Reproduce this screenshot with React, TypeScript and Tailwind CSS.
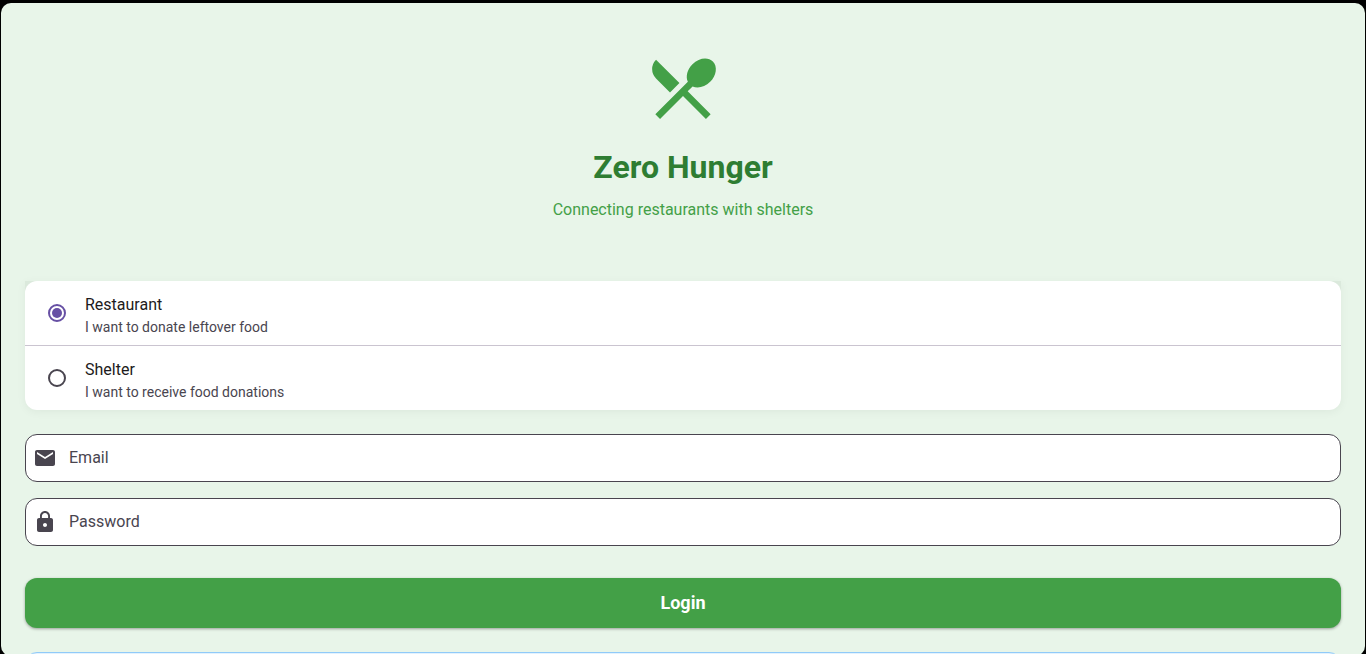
import { useState } from "react";
import { MdEmail, MdLock, MdRestaurantMenu } from "react-icons/md";

type Role = "restaurant" | "shelter";

const roles: { value: Role; title: string; detail: string }[] = [
  { value: "restaurant", title: "Restaurant", detail: "I want to donate leftover food" },
  { value: "shelter", title: "Shelter", detail: "I want to receive food donations" },
];

const fields = [
  { id: "email", label: "Email", type: "email", Icon: MdEmail },
  { id: "password", label: "Password", type: "password", Icon: MdLock },
];

function RolePicker() {
  const [role, setRole] = useState<Role>("restaurant");
  return (
    <div className="rounded-b-xl bg-[#dbe9dc] shadow-[0_2px_10px_rgba(0,0,0,0.05)]">
      <div className="divide-y divide-[#cac4d0] rounded-xl bg-white">
        {roles.map(({ value, title, detail }) => (
          <label key={value} className="box-content flex h-16 cursor-pointer items-center gap-[19px] px-[23px]">
            <input
              type="radio"
              name="role"
              value={value}
              checked={role === value}
              onChange={() => setRole(value)}
              className="grid size-[18px] shrink-0 appearance-none place-items-center rounded-full border-2 border-[#49454f] before:size-[10px] before:rounded-full checked:border-[#6750a4] checked:before:bg-[#6750a4]"
            />
            <span className="flex flex-col pt-1">
              <span className="text-base leading-6 text-[#1d1b20]">{title}</span>
              <span className="text-sm leading-5 text-[#49454f]">{detail}</span>
            </span>
          </label>
        ))}
      </div>
    </div>
  );
}

export default function App() {
  return (
    <div className="h-screen overflow-hidden bg-black px-px pt-[3px] font-['Roboto',sans-serif]">
      <main className="flex h-[calc(100%+2px)] flex-col rounded-[10px] bg-[#e8f5e9] px-6 pt-[45px]">
        <header className="flex shrink-0 flex-col items-center text-center">
          <MdRestaurantMenu className="size-20 text-[#43a047]" />
          <h1 className="mt-4 text-[32px] leading-[46px] font-bold text-[#2e7d32]">Zero Hunger</h1>
          <p className="mt-2 text-base leading-6 text-[#43a047]">Connecting restaurants with shelters</p>
        </header>

        <form className="mt-[59px] flex shrink-0 flex-col" onSubmit={(e) => e.preventDefault()}>
          <RolePicker />
          <div className="mt-6 flex flex-col gap-4">
            {fields.map(({ id, label, type, Icon }) => (
              <label
                key={id}
                htmlFor={id}
                className="flex h-12 items-center gap-3 rounded-xl border border-[#49454f] bg-white px-[7px] text-[#49454f]"
              >
                <Icon className="size-6 shrink-0" />
                <input
                  id={id}
                  type={type}
                  aria-label={label}
                  placeholder={label}
                  className="min-w-0 flex-1 bg-transparent text-base leading-6 outline-none placeholder:text-[#49454f]"
                />
              </label>
            ))}
          </div>
          <button
            type="submit"
            className="mt-8 h-[50px] rounded-xl bg-[#43a047] text-lg font-bold text-white shadow-[0_1px_3px_rgba(0,0,0,0.35)]"
          >
            Login
          </button>
        </form>

        <div className="mt-6 h-20 shrink-0 rounded-xl border border-[#90caf9] bg-[#e3f2fd]" />
      </main>
    </div>
  );
}
